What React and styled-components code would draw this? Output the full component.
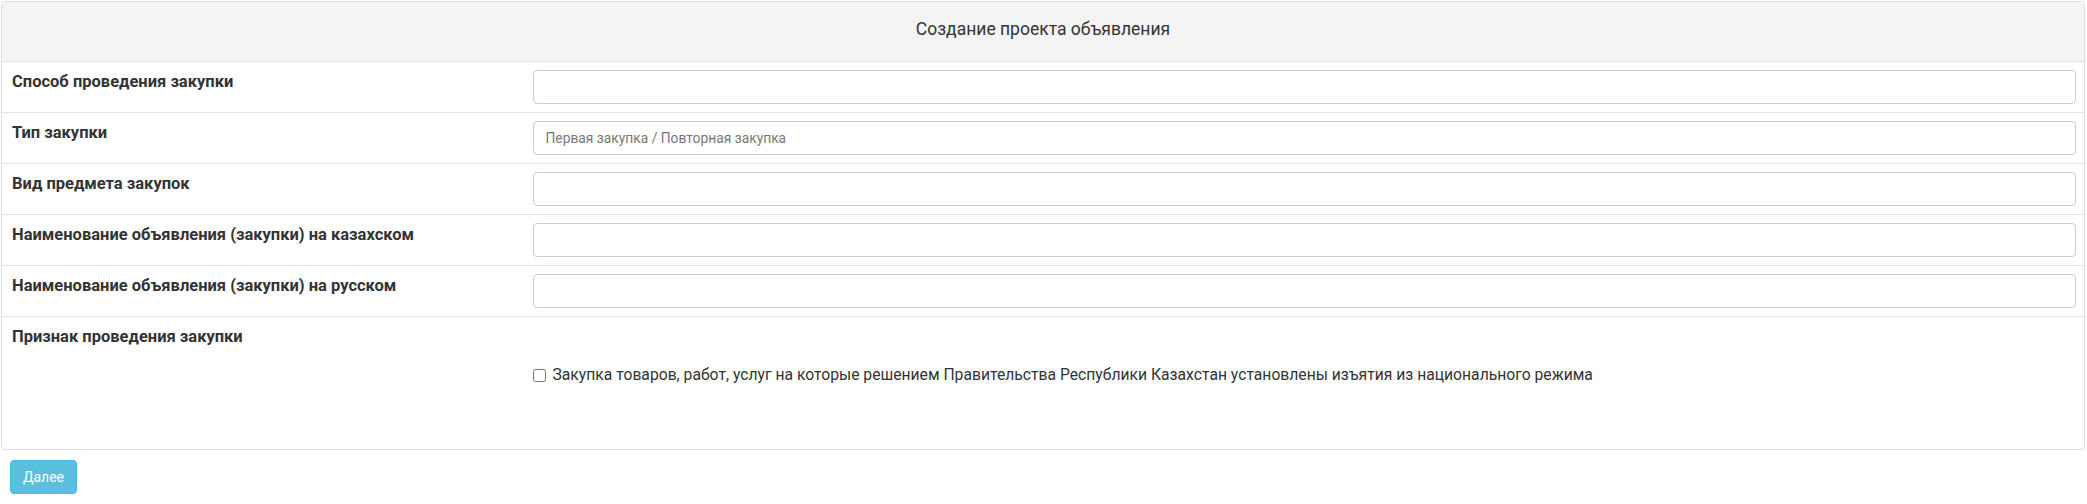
import styled, { createGlobalStyle } from "styled-components";

const GlobalStyle = createGlobalStyle`
  body {
    margin: 0;
    background: #fff;
    font-family: Roboto, "Liberation Sans", Arial, sans-serif;
    color: #333;
  }
`;

const rows = [
  { label: "Способ проведения закупки", placeholder: "" },
  { label: "Тип закупки", placeholder: "Первая закупка / Повторная закупка" },
  { label: "Вид предмета закупок", placeholder: "" },
  { label: "Наименование объявления (закупки) на казахском", placeholder: "" },
  { label: "Наименование объявления (закупки) на русском", placeholder: "" },
];

const App = () => {
  return (
    <Page>
      <GlobalStyle />
      <Panel>
        <Heading>Создание проекта объявления</Heading>
        {rows.map((r) => (
          <Row key={r.label}>
            <Label>{r.label}</Label>
            <Field>
              <Input placeholder={r.placeholder} />
            </Field>
          </Row>
        ))}
        <Row $tall>
          <Label>Признак проведения закупки</Label>
          <Field $check>
            <Check>
              <input type="checkbox" />
              Закупка товаров, работ, услуг на которые решением Правительства
              Республики Казахстан установлены изъятия из национального режима
            </Check>
          </Field>
        </Row>
      </Panel>
      <Button>Далее</Button>
    </Page>
  );
};

const Page = styled.div`
  padding: 1px 2px 20px 1px;
`;

const Panel = styled.div`
  border: 1px solid #dcdcdc;
  border-radius: 4px;
  overflow: hidden;
`;

const Heading = styled.div`
  background: #f4f4f4;
  text-align: center;
  font-size: 17.5px;
  line-height: 20px;
  padding: 17px 10px 22px;
  color: #333;
`;

const Row = styled.div`
  display: grid;
  grid-template-columns: 25% 75%;
  border-top: 1px solid #e3e3e3;
  height: ${(p) => (p.$tall ? "132px" : "50px")};
`;

const Label = styled.div`
  padding: 10px 10px 0 10px;
  font-size: 16.5px;
  line-height: 20px;
  font-weight: 700;
  color: #333;
`;

const Field = styled.div`
  padding: ${(p) => (p.$check ? "48px 10px 0 10px" : "8px 8px 0 10px")};
`;

const Input = styled.input`
  box-sizing: border-box;
  width: 100%;
  height: 34px;
  border: 1px solid #ccc;
  border-radius: 4px;
  padding: 0 12px;
  font-family: Roboto, "Liberation Sans", Arial, sans-serif;
  font-size: 13.8px;
  color: #555;
  background: #fff;
  &::placeholder {
    color: #777;
  }
`;

const Check = styled.label`
  display: flex;
  align-items: center;
  gap: 7px;
  font-size: 15.7px;
  line-height: 20px;
  color: #333;
  input {
    margin: 0;
    width: 13px;
    height: 13px;
  }
`;

const Button = styled.button`
  margin: 10px 0 0 9px;
  width: 67px;
  height: 34px;
  background: #5bc0de;
  border: 1px solid #46b8da;
  border-radius: 4px;
  color: #fff;
  font-family: Roboto, "Liberation Sans", Arial, sans-serif;
  font-size: 14px;
  cursor: pointer;
`;

export default App;
